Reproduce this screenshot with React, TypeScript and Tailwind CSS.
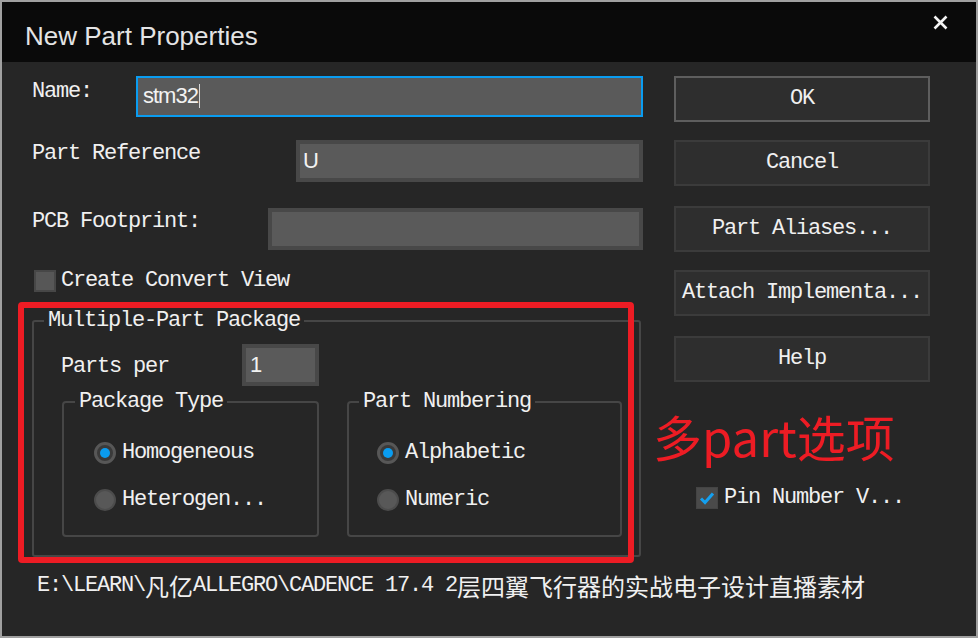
import React from 'react';

const mono = "font-['Liberation_Mono',monospace] text-[22px] leading-[26px] tracking-[-1.2px] text-[#f0f0f0] whitespace-pre";
const cjk = "font-['Noto_Sans_CJK_SC',sans-serif] text-[24px] tracking-normal";
const inputText = "font-['Liberation_Sans',Arial,sans-serif] text-[22px] tracking-[-1px] text-[#f2f2f2]";

function Radio({ checked, label }: { checked?: boolean; label: string }) {
  return (
    <div className="flex items-center">
      {checked ? (
        <span className="w-[22px] h-[22px] rounded-full border-[3px] border-[#575757] bg-[#3a3a3a] flex items-center justify-center">
          <span className="w-[10px] h-[10px] rounded-full bg-[#0a9cf0]" />
        </span>
      ) : (
        <span className="w-[22px] h-[22px] rounded-full border-2 border-[#4c4c4c] bg-[#585858]" />
      )}
      <span className={`${mono} ml-[6px]`}>{label}</span>
    </div>
  );
}

function Button({ label, primary, className }: { label: string; primary?: boolean; className: string }) {
  return (
    <div
      className={`h-[46px] flex items-center justify-center bg-[#2e2e2e] border-2 ${primary ? 'border-[#5e5e5e]' : 'border-[#3b3b3b]'} ${className}`}
    >
      <span className={mono}>{label}</span>
    </div>
  );
}

export default function App() {
  return (
    <div className="relative w-[978px] h-[638px] border-2 border-[#a0a0a0] bg-[#262626] flex flex-col overflow-hidden">
      {/* title bar */}
      <div className="h-[60px] bg-[#0a0a0a] flex items-start justify-between">
        <span className="pl-[23px] pt-[21px] font-['Liberation_Sans',Arial,sans-serif] text-[26px] leading-[26px] text-[#e4e4e4]">
          New Part Properties
        </span>
        <svg className="mt-[13px] mr-[28px]" width="15" height="15" viewBox="0 0 15 15">
          <path d="M1.5 1.5 L13.5 13.5 M13.5 1.5 L1.5 13.5" stroke="#f4f4f4" strokeWidth="2.6" />
        </svg>
      </div>

      <div className="flex">
        {/* left side */}
        <div className="w-[641px] pl-[30px] flex flex-col">
          <div className="mt-[14px] h-[41px] flex items-start">
            <span className={`${mono} mt-[3px] w-[104px]`}>Name:</span>
            <div className="flex-1 h-full border-2 border-[#0a9cf0] bg-[#5a5a5a] flex items-center pl-[5px] pb-[2px]">
              <span className={inputText}>stm32</span>
              <span className="w-px h-[24px] bg-[#d8d8d8] ml-[1px]" />
            </div>
          </div>

          <div className="mt-[23px] h-[42px] flex items-start">
            <span className={`${mono} mt-[1px] w-[264px]`}>Part Reference</span>
            <div className="flex-1 h-full border-4 border-[#484848] bg-[#5a5a5a] flex items-center pl-[3px] pb-[2px]">
              <span className={inputText}>U</span>
            </div>
          </div>

          <div className="mt-[26px] h-[42px] flex items-start">
            <span className={`${mono} mt-[1px] w-[236px]`}>PCB Footprint:</span>
            <div className="flex-1 h-full border-4 border-[#484848] bg-[#5a5a5a]" />
          </div>

          <div className="mt-[18px] flex items-center">
            <span className="ml-[2px] w-[22px] h-[22px] border-2 border-[#474747] bg-[#575757]" />
            <span className={`${mono} ml-[5px]`}>Create Convert View</span>
          </div>

          <fieldset className="mt-[14px] w-[609px] h-[249px] border-2 border-[#464646] rounded-[3px]">
            <legend className={`${mono} ml-[10px] px-[4px]`}>Multiple-Part Package</legend>
            <div className="pl-[27px] flex flex-col">
              <div className="mt-[10px] h-[42px] flex items-start">
                <span className={`${mono} mt-[10px] w-[181px]`}>Parts per</span>
                <div className="w-[77px] h-full border-4 border-[#484848] bg-[#5a5a5a] flex items-center pl-[4px] pb-[2px]">
                  <span className={inputText}>1</span>
                </div>
              </div>
              <div className="mt-[3px] ml-[1px] flex">
                <fieldset className="w-[257px] h-[148px] border-2 border-[#464646] rounded-[4px]">
                  <legend className={`${mono} ml-[11px] px-[4px]`}>Package Type</legend>
                  <div className="pl-[30px] pt-[25px] flex flex-col gap-[21px]">
                    <Radio checked label="Homogeneous" />
                    <Radio label="Heterogen..." />
                  </div>
                </fieldset>
                <fieldset className="ml-[28px] w-[275px] h-[148px] border-2 border-[#464646] rounded-[4px]">
                  <legend className={`${mono} ml-[10px] px-[4px]`}>Part Numbering</legend>
                  <div className="pl-[28px] pt-[25px] flex flex-col gap-[21px]">
                    <Radio checked label="Alphabetic" />
                    <Radio label="Numeric" />
                  </div>
                </fieldset>
              </div>
            </div>
          </fieldset>

          <div className={`${mono} mt-[16px] ml-[5px] flex items-center`}>
            <span>{'E:\\LEARN\\'}</span>
            <span className={cjk}>凡亿</span>
            <span>{'ALLEGRO\\CADENCE 17.4 2'}</span>
            <span className={cjk}>层四翼飞行器的实战电子设计直播素材</span>
          </div>
        </div>

        {/* right side */}
        <div className="ml-[31px] w-[256px] flex flex-col">
          <Button primary label="OK" className="mt-[14px]" />
          <Button label="Cancel" className="mt-[18px]" />
          <Button label="Part Aliases..." className="mt-[20px]" />
          <Button label="Attach Implementa..." className="mt-[18px]" />
          <Button label="Help" className="mt-[20px]" />

          <span className="mt-[29px] -ml-[21px] font-['Noto_Sans_CJK_SC',sans-serif] text-[49px] leading-[49px] text-[#ed1c24] whitespace-nowrap">
            多part选项
          </span>

          <div className="mt-[25px] ml-[22px] flex items-center">
            <span className="w-[22px] h-[22px] bg-[#4a4a4a] border border-[#444] flex items-center justify-center">
              <svg width="16" height="14" viewBox="0 0 16 14">
                <path d="M2 7.5 L6 11.5 L14 2.5" fill="none" stroke="#14a0f0" strokeWidth="3" />
              </svg>
            </span>
            <span className={`${mono} ml-[6px]`}>Pin Number V...</span>
          </div>
        </div>
      </div>

      {/* red annotation frame */}
      <div className="absolute left-[16px] top-[300px] w-[616px] h-[261px] border-[6px] border-[#ed1c24] rounded-[4px] pointer-events-none" />
    </div>
  );
}
